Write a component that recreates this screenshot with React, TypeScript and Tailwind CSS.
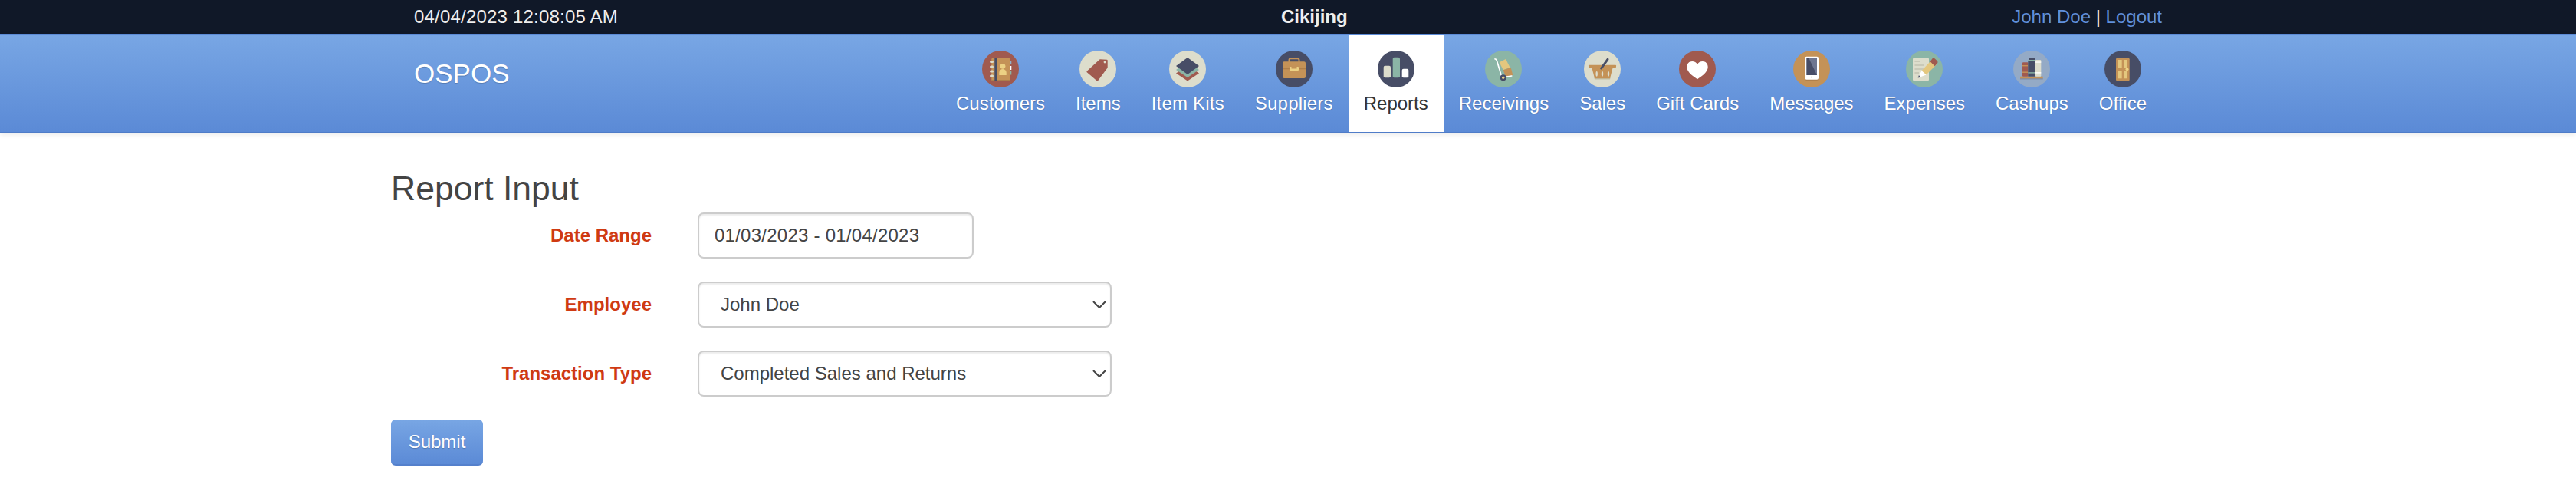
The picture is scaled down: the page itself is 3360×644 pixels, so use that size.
import type { ReactNode } from "react";

const RED = "#a05a4f";
const CREAM = "#ddddcc";
const NAVY = "#474d66";
const ORANGE = "#c49257";
const TEAL = "#8bb5a6";
const SAND = "#e4c77e";
const YELLOW = "#ecd184";

function Icon({ bg, children }: { bg: string; children: ReactNode }) {
  return (
    <svg viewBox="0 0 48 48" className="h-12 w-12 shrink-0" aria-hidden>
      <circle cx="24" cy="24" r="24" fill={bg} />
      {children}
    </svg>
  );
}

const navItems: { label: string; icon: ReactNode; active?: boolean; wide?: boolean }[] = [
  {
    label: "Customers",
    icon: (
      <Icon bg={RED}>
        <rect x="12.3" y="9.3" width="24" height="30.4" rx="2" fill={ORANGE} />
        <rect x="12.3" y="38" width="24" height="1.7" fill="#ac7f4c" />
        <rect x="16.3" y="9.3" width="2.7" height="30.4" fill={NAVY} />
        <rect x="10" y="13" width="5" height="3" rx="1.5" fill={CREAM} />
        <rect x="10" y="19.5" width="5" height="3" rx="1.5" fill={CREAM} />
        <rect x="10" y="25.5" width="5" height="3" rx="1.5" fill={CREAM} />
        <rect x="10" y="31.5" width="5" height="3" rx="1.5" fill={CREAM} />
        <rect x="36.3" y="13" width="2" height="5" fill="#8fb0c8" />
        <rect x="36.3" y="20" width="2" height="5" fill="#ffffff" />
        <rect x="36.3" y="26" width="2" height="5.5" fill={TEAL} />
        <circle cx="27" cy="20.3" r="3.4" fill={YELLOW} />
        <path d="M22.3 32v-3.2a4.7 4.7 0 0 1 9.4 0V32z" fill={YELLOW} />
      </Icon>
    ),
  },
  {
    label: "Items",
    icon: (
      <Icon bg={CREAM}>
        <path
          d="M27 12.3L35.7 12.8V21.8L23.3 38.6L10.4 27.6z"
          fill={RED}
          stroke={RED}
          strokeWidth="2"
          strokeLinejoin="round"
        />
        <circle cx="33" cy="15" r="1.4" fill={CREAM} />
      </Icon>
    ),
  },
  {
    label: "Item Kits",
    wide: true,
    icon: (
      <Icon bg={CREAM}>
        <path d="M24 19.5L39 29.5L24 39.5L9 29.5z" fill={RED} />
        <path d="M24 15L39 25L24 35L9 25z" fill={TEAL} />
        <path d="M24 9L39 20L24 31L9 20z" fill={NAVY} />
      </Icon>
    ),
  },
  {
    label: "Suppliers",
    wide: true,
    icon: (
      <Icon bg={NAVY}>
        <rect x="17.5" y="10.2" width="13" height="7" rx="2" fill="none" stroke={ORANGE} strokeWidth="2" />
        <rect x="9" y="14.3" width="30" height="21.7" rx="2" fill={ORANGE} />
        <rect x="9" y="23.2" width="30" height="1" fill="#a97b47" />
        <rect x="18" y="21" width="12" height="5" rx="1" fill={YELLOW} />
        <rect x="20.5" y="21" width="7" height="2.5" fill={ORANGE} />
      </Icon>
    ),
  },
  {
    label: "Reports",
    active: true,
    icon: (
      <Icon bg={NAVY}>
        <rect x="7.7" y="19.7" width="9.3" height="15.6" rx="2" fill={CREAM} />
        <rect x="19.7" y="8.7" width="9.3" height="26.6" rx="2" fill={TEAL} />
        <rect x="31.7" y="23.7" width="8.6" height="11.6" rx="2" fill="#ffffff" />
      </Icon>
    ),
  },
  {
    label: "Receivings",
    icon: (
      <Icon bg={TEAL}>
        <path d="M18.7 15.3L27 11L32.7 22L23.7 25.3z" fill={SAND} />
        <path d="M23.7 25.3L33.7 22L36.3 32L27 34.3z" fill={ORANGE} />
        <path
          d="M13 10.8C14.5 10.8 15 11.5 15.4 13L22 35L34.7 33"
          fill="none"
          stroke="#ffffff"
          strokeWidth="1.7"
          strokeLinecap="round"
        />
        <circle cx="23.7" cy="35.3" r="4" fill={NAVY} />
        <circle cx="23.7" cy="35.3" r="1.7" fill={YELLOW} />
      </Icon>
    ),
  },
  {
    label: "Sales",
    icon: (
      <Icon bg={CREAM}>
        <path d="M14 37.5H34L35 34H13z" fill="#c2bfa6" />
        <path d="M10 21H38L34 36.3H14z" fill={ORANGE} />
        <rect x="6" y="18.7" width="36" height="3.3" rx="0.8" fill={ORANGE} />
        <ellipse cx="16.7" cy="30.3" rx="1.2" ry="3.4" fill={CREAM} />
        <ellipse cx="24" cy="30.3" rx="1.2" ry="3.4" fill={CREAM} />
        <ellipse cx="32" cy="30.3" rx="1.2" ry="3.4" fill={CREAM} />
        <path d="M22.7 23L31 11.3" stroke={NAVY} strokeWidth="3" strokeLinecap="round" />
      </Icon>
    ),
  },
  {
    label: "Gift Cards",
    icon: (
      <Icon bg={RED}>
        <path
          d="M24 37.2C19 33.5 10.3 28.6 10.3 21.2C10.3 16.8 13.4 14 17.2 14C20.2 14 22.7 15.6 24 18C25.3 15.6 27.8 14 30.8 14C34.6 14 37.7 16.8 37.7 21.2C37.7 28.6 29 33.5 24 37.2z"
          fill="#ffffff"
        />
      </Icon>
    ),
  },
  {
    label: "Messages",
    icon: (
      <Icon bg={ORANGE}>
        <rect x="15.3" y="8.7" width="17.7" height="30" rx="2" fill="#a97b47" />
        <rect x="15.3" y="7.7" width="17.7" height="30" rx="2" fill="#ffffff" />
        <rect x="17.3" y="9.7" width="13.7" height="22.3" fill={NAVY} />
        <path d="M20.3 9.7H31V32z" fill="#6e7690" />
        <circle cx="24" cy="34.7" r="1.1" fill={CREAM} />
      </Icon>
    ),
  },
  {
    label: "Expenses",
    icon: (
      <Icon bg={TEAL}>
        <rect x="9" y="9" width="21" height="30.7" rx="2" fill={CREAM} />
        <path d="M11.5 14H19M11.5 19H24M11.5 24H24M11.5 29H17" stroke="#b5b5a3" strokeWidth="1.2" />
        <path d="M20.5 26.3L34.5 11.3L41 17L26.5 31.5z" fill={SAND} />
        <path d="M31.7 14.2L34.5 10.3Q36 9 37.5 10.3L41 13.5Q42.2 15 41 16.5L37.6 20.2z" fill={RED} />
        <path d="M20.5 26.3L26.5 31.5L15.7 35.5z" fill="#ffffff" />
        <path d="M17 32L19 34.7L15.7 35.5z" fill={NAVY} />
      </Icon>
    ),
  },
  {
    label: "Cashups",
    icon: (
      <Icon bg="#94aac6">
        <rect x="9" y="36" width="29.7" height="1.5" fill="#7b8ba8" />
        <rect x="9" y="33.7" width="29.7" height="2.6" fill={ORANGE} />
        <rect x="12" y="15.3" width="7.3" height="18.4" rx="1" fill={RED} />
        <rect x="12" y="19" width="7.3" height="1.4" fill={ORANGE} />
        <rect x="12" y="27.5" width="7.3" height="1.4" fill={ORANGE} />
        <rect x="20" y="9.3" width="8.5" height="5" rx="1.5" fill={NAVY} />
        <rect x="19.3" y="13" width="9.7" height="20.7" fill={NAVY} />
        <rect x="19.3" y="12" width="9.7" height="1.3" fill={TEAL} />
        <rect x="19.3" y="28.2" width="9.7" height="1.4" fill={TEAL} />
        <rect x="29" y="12" width="7.3" height="21.7" rx="1" fill={CREAM} />
        <rect x="29" y="14.4" width="7.3" height="1.3" fill="#ffffff" />
        <rect x="29" y="28.2" width="7.3" height="1.4" fill="#ffffff" />
      </Icon>
    ),
  },
  {
    label: "Office",
    icon: (
      <Icon bg={NAVY}>
        <rect x="15" y="9.3" width="17.7" height="30.4" rx="2" fill={ORANGE} />
        <rect x="17.7" y="12" width="5" height="10.7" fill={SAND} />
        <rect x="25" y="12" width="5" height="10.7" fill={SAND} />
        <rect x="17.7" y="26.3" width="5" height="10" fill={SAND} />
        <rect x="25" y="26.3" width="5" height="10" fill={SAND} />
        <circle cx="29.5" cy="24.3" r="2" fill={YELLOW} />
      </Icon>
    ),
  },
];

function Chevron() {
  return (
    <svg
      viewBox="0 0 18 10"
      className="pointer-events-none absolute right-[7px] top-[25px] h-[10px] w-[18px]"
      aria-hidden
    >
      <path d="M1 1L9 9L17 1" fill="none" stroke="#444444" strokeWidth="2" />
    </svg>
  );
}

function Field({ label, children }: { label: string; children: ReactNode }) {
  return (
    <div className="flex h-[60px] items-center">
      <label className="mr-[60px] w-[340px] text-right font-bold text-[#cf3a12]">{label}</label>
      {children}
    </div>
  );
}

function SelectBox({ value }: { value: string }) {
  return (
    <div className="relative h-[60px] w-[540px]">
      <select
        defaultValue={value}
        className="h-full w-full appearance-none rounded-lg border-2 border-[#cccccc] bg-white pl-[28px] text-[#444444] shadow-[inset_0_2px_2px_rgba(0,0,0,0.08)]"
      >
        <option>{value}</option>
      </select>
      <Chevron />
    </div>
  );
}

export default function App() {
  return (
    <div className="min-h-[644px] bg-white font-['Liberation_Sans',Arial,sans-serif] text-2xl text-[#444444]">
      <div className="h-[44px] bg-[#101828] leading-[44px] text-[#eeeeee]">
        <div className="mx-auto flex w-[2280px]">
          <div className="w-[1131px] tracking-[0.2px]">04/04/2023 12:08:05 AM</div>
          <div className="font-bold">Cikijing</div>
          <div className="ml-auto">
            <a className="text-[#6090dc]">John Doe</a> | <a className="text-[#6090dc]">Logout</a>
          </div>
        </div>
      </div>

      <header className="h-[130px] border-t-2 border-b-2 border-t-[#5b8ad6] border-b-[#4f7cc8] bg-gradient-to-b from-[#78a6e4] to-[#5b8ad6] shadow-[0_2px_6px_rgba(0,0,0,0.08)]">
        <div className="mx-auto flex w-[2280px] justify-between">
          <a className="pt-[27px] text-[35px] leading-[46px] text-white [text-shadow:0_1px_1px_rgba(0,0,0,0.2)]">
            OSPOS
          </a>
          <nav className="flex">
            {navItems.map((item) => (
              <a
                key={item.label}
                className={
                  item.active
                    ? "flex h-[126px] flex-col items-center bg-white px-5 pt-5 text-[#333333]"
                    : "flex h-[126px] flex-col items-center px-5 pt-5 text-white [text-shadow:0_1px_1px_rgba(0,0,0,0.25)]"
                }
              >
                {item.icon}
                <span className={item.wide ? "mt-1 leading-[34px] tracking-[0.2px] whitespace-nowrap" : "mt-1 leading-[34px] whitespace-nowrap"}>
                  {item.label}
                </span>
              </a>
            ))}
          </nav>
        </div>
      </header>

      <main className="mx-auto w-[2340px]">
        <h1 className="mt-[46px] mb-[5px] text-[44.5px] leading-[52px] text-[#444444]">Report Input</h1>
        <form className="flex flex-col gap-[30px]">
          <Field label="Date Range">
            <input
              readOnly
              value="01/03/2023 - 01/04/2023"
              className="h-[60px] w-[360px] rounded-lg border-2 border-[#cccccc] bg-white pl-[20px] tracking-[0.25px] text-[#444444] shadow-[inset_0_2px_2px_rgba(0,0,0,0.08)]"
            />
          </Field>
          <Field label="Employee">
            <SelectBox value="John Doe" />
          </Field>
          <Field label="Transaction Type">
            <SelectBox value="Completed Sales and Returns" />
          </Field>
          <div>
            <button
              type="button"
              className="h-[60px] w-[120px] rounded-md border-b-2 border-[#5480cc] bg-gradient-to-b from-[#78a6e4] to-[#5b8ad6] text-white [text-shadow:0_1px_1px_rgba(0,0,0,0.2)]"
            >
              Submit
            </button>
          </div>
        </form>
      </main>
    </div>
  );
}
